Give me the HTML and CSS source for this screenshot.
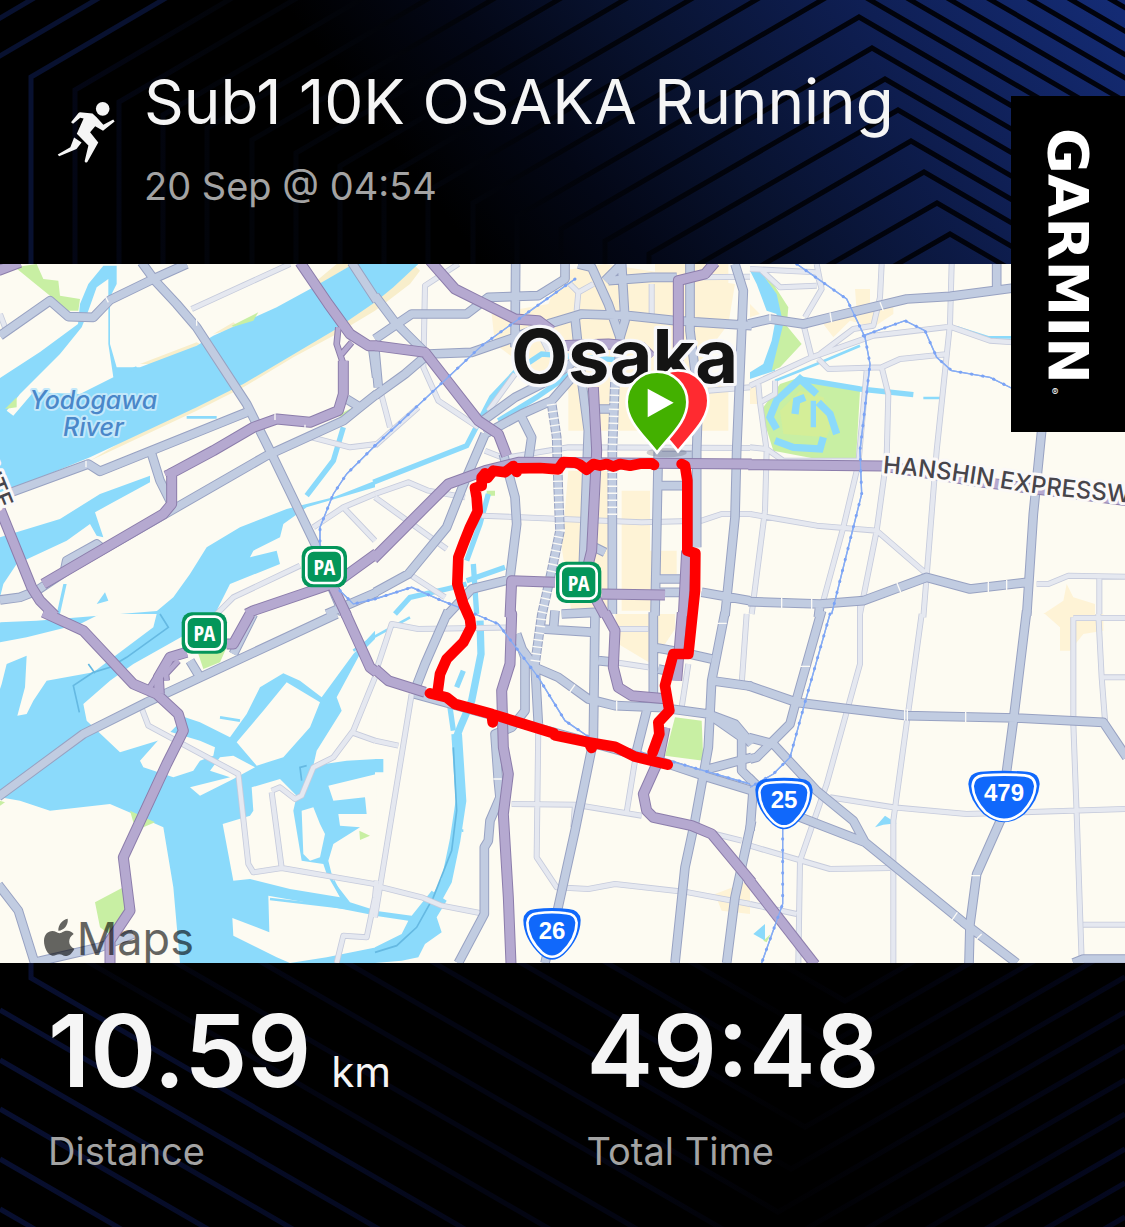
FILE: index.html
```html
<!DOCTYPE html>
<html lang="en">
<head>
<meta charset="utf-8">
<meta name="viewport" content="width=device-width, initial-scale=1">
<title>Sub1 10K OSAKA Running</title>
<link rel="stylesheet" href="styles.css">
</head>
<body>
<main class="card">
  <header class="card-head">
    <svg class="backdrop" viewBox="0 0 1125 264" preserveAspectRatio="xMaxYMin slice" aria-hidden="true">
      <defs>
        <linearGradient id="sky" gradientUnits="userSpaceOnUse" x1="380" y1="130" x2="904" y2="-270">
          <stop offset="0" stop-color="#000"/>
          <stop offset=".2" stop-color="#030716"/>
          <stop offset=".4" stop-color="#08122f"/>
          <stop offset=".7" stop-color="#0f1f54"/>
          <stop offset="1" stop-color="#142b74"/>
        </linearGradient>
        <linearGradient id="sky-line" gradientUnits="userSpaceOnUse" x1="0" y1="0" x2="1125" y2="0">
          <stop offset="0" stop-color="#04071a"/>
          <stop offset=".2" stop-color="#020409"/>
          <stop offset="1" stop-color="#01030d"/>
        </linearGradient>
      </defs>
      <rect width="1125" height="264" fill="url(#sky)"/>
      <g fill="none" stroke-width="5">
        <path stroke="#081130" d="M-58 264V52L690-386M-14 264V64L703-355M31 264V77L716-324"/>
        <path stroke="url(#sky-line)" d="M75 264V90L729-293l600 349M119 264V102L742-262l600 349M163 264V115L755-231l600 349M207 264V128L768-200l600 349M252 264V140L781-169l600 349M296 264V153L794-138l600 349M340 264V166L807-107l600 349M384 264V178L820-76l600 349M428 264V191L833-45l600 349M473 264V203L846-14l600 349M517 264V216L859 17l600 349M561 264V229L872 48l600 349M605 264V241L885 79l600 349M649 264V254L898 110l600 349M694 267L911 141l600 349M738 279L924 172l600 349M782 292L937 203l600 349M826 305L950 234l600 349"/>
      </g>
    </svg>
    <svg class="runner" viewBox="48 60 176 188" aria-hidden="true">
      <circle cx="185" cy="86" r="20"/>
      <path d="M118 96 155 100 167 111 187 133 216 117 220 123 186 150 163 137 148 155 172 185 140 242Q134 246 132 240L143 194 109 159 129 114 119 112 98 130 92 125 114 98Z"/>
      <path d="M101 170 123 185 108 204 57 225 53 220 90 199Z"/>
    </svg>
    <div class="heading">
      <h1>Sub1 10K OSAKA Running</h1>
      <p class="when">20 Sep @ 04:54</p>
    </div>
  </header>

  <svg class="map" viewBox="0 0 3375 2097" role="img" aria-label="Route map of Osaka">
    <defs>
      <g id="minor">
        <path d="M575 135 870 0M650 1050 700 1000 900 905M935 520 1050 550 1130 540M940 790 1030 730 1125 690M1030 730 1125 830M0 150 15 190"/>
        <g transform="translate(1125 0)"><path d="M250 0 150 65 145 310 190 410 310 490M20 395 45 490M0 690 100 655 160 680 270 700M0 700 215 855M320 755 560 765 800 775 980 770 1040 750 1130 750M585 60 610 85 605 140M610 85 655 60M830 60V150M400 580 580 550 1125 552M110 935 210 1000M500 220 520 260M960 40 1125 38M420 330 340 440M1000 380 1125 370M0 545 130 430M330 560 380 580"/></g>
        <g transform="translate(2250 0)"><path d="M0 15 200 25 215 75 165 160M30 15 90 70 200 65M200 0 215 75M395 0 390 100 370 185 310 195 210 270M605 0 600 180 560 560 520 1060M160 180 185 280 0 365M185 280 370 215 600 188 720 230 790 235M205 285 235 315 395 310 450 285 595 270M350 320 325 600 280 790 220 1010M395 310 415 390 410 580 380 800 330 1050M75 350V390L30 415 50 560 45 740 5 1050M25 360 30 415M0 550 50 555 100 590H330M0 750 200 785 380 800 530 930M860 960 895 960 955 935 1125 938M1048 940V1050"/></g>
        <g transform="translate(0 1050)"><path d="M420 270 445 335 715 480 745 750 760 775 845 762 1130 811M815 535 845 762M815 530 840 520 885 555 905 545 940 460 1000 430 1060 350 1125 190M1055 355 1125 380M1130 800 1125 850 1100 970 1030 965 1010 1047"/></g>
        <g transform="translate(1125 1050)"><path d="M0 180 50 30 130 45 420 40M110 240 0 910M0 380 70 395M0 815 140 850 200 875 330 900M490 330 485 730 545 820 640 825 720 810 940 835 1125 870M410 570 600 572 800 605M600 572 595 640M780 440 755 595M1115 0 1100 210M690 140 820 160M720 45H820M940 150 920 280M1020 660 1100 680"/></g>
        <g transform="translate(2250 1050)"><path d="M330-40V150L230 510 150 740 145 1047M515 0 430 620V1047M240 550 430 580 650 600 1125 585M0 695 240 765 420 762M970 10V330L980 600 995 1040M970 12H1125M1045 0 1055 190 1065 320M1055 190H1125M1000 932H1125M0 870 140 900"/></g>
      </g>
      <g id="major">
        <path d="M0 215 150 110 205 158 280 160 330 108 460 45 560 0M425-5 465 50 530 120 590 190 740 420 765 470 815 570 950 850 1000 980 1030 1050M20 690 265 600 300 622 740 445M455 570 480 650 520 730M0 1008 60 1000 110 980 200 920 530 730 800 575 1030 470 1080 430 1130 390M195 915 200 890 290 840 315 860M1055-5 1130 110M1040 405 1080 430M1118 250 1130 340M980 1050 1130 985"/>
        <g transform="translate(1125 0)"><path d="M0 95 60 175 150 265M422-5 420 250M0 225 110 150H275L340 100 490 95 570 45V-5M0 395 90 330 160 270 290 265 420 220 520 180M0 260 10 370M610 0 650 10 700 120 735 220 730 350M740 0 750 170 735 220M700 50 830 40 905 40M690 50 740 0M520 180 620 150 760 155 900 170 1130 185M600 160 620 350 640 500 625 900M945 0V200L970 400 965 560V850M1080 0 1105 80 1085 560 1080 760 1050 1055M310 480 420 400 520 350 600 290M330 510 440 450 530 410 600 330M330 510 270 650 215 790 100 930 0 985M440 460 470 520 460 590M385 570 420 700 425 780 405 940M850 560 840 1055M670 435H720M850 575H950M850 665H940M840 945H920M840 985H925M660 850 690 865M980 985 1125 1010M215 1055 290 975 410 945"/></g>
        <g id="chevron-streets" transform="translate(1125 0)"><path d="M530 420 545 520 550 680 555 800 530 920 500 1055 480 1200M720 350 712 560V1050"/></g>
        <g transform="translate(2250 0)"><path d="M-5 180 60 165 160 180 240 160 470 105 600 97 790 72M740 0V75M875 500 850 750 830 1055M-5 1013 210 1020 340 1010 530 940 660 975 830 955M210 1020 205 1060"/></g>
        <g transform="translate(0 1050)"><path d="M-5 548 250 360 440 265 1010 0M-5 812 55 890 105 1050M105 1045 300 1000 400 960M760 0 700 120M570 140 600 190"/></g>
        <g transform="translate(1125 1050)"><path d="M220-10 150 150 115 240M480 150 490 330M425 60 450 130V290L410 340 360 360 370 500 375 550 345 620 340 680 328 700V900L250 1047M430 90 480 160 550 190 640 255 720 275 850 280 1000 300 1080 330 1130 390M540-10 535 50M560 0 660-5 660 0 655 380 600 650 545 900 510 1047M500 45 660 55M670 140 720 145M835-5V260M835 100 920 115 1010 135M850 165 920 180M1050-5 1010 200 1000 400 960 620 930 760 900 1047M820 270 780 430M1010 200 1130 217M120 240 880 450 1000 490 1130 530M1000 465 1130 430M1000 300 1100 370V470L1130 500M1130 620 1080 850 1055 1047"/></g>
        <g transform="translate(2250 1050)"><path d="M215-10 140 255 120 330 60 390 20 430 0 435M-5 215 140 265 300 285 470 305 800 312 1060 325 1130 430M-5 370 70 390 200 530 310 620 345 685M-5 490 100 590 345 685 640 925 800 1047M830-10 790 320 770 470 760 600 680 780 660 930 657 1047M970 1047 1000 1035H1130M10 520 0 650"/></g>
      </g>
      <g id="expressway">
        <path d="M-5 20 60-5M900-5 985 120 1050 210 1105 245 1130 245M515 630V720L490 750 130 960M0 735 95 970 120 1010 165 1055M740 1050 760 1040 1010 955 1130 868M1000 970 1040 1055M1030 290V390L1015 440 930 475 830 465 760 490 640 560 510 630"/>
        <g transform="translate(1125 0)"><path d="M165-10 240 75 320 115 420 165 490 170 530 200M0 245 150 265 310 470 370 510 395 575M-5 885 220 660 330 620 430 595 1130 600M550 245 700 240 800 250 830 280M1020-5 990 30 910 50V320M655 370 665 560 650 860 640 900M935 860 925 1055M405 1060 410 950 540 955M680 990 870 993M660 1000 690 1055"/></g>
        <g transform="translate(2250 0)"><path d="M-5 602 400 606 700 655 1130 710"/></g>
        <g transform="translate(0 1050)"><path d="M130-5 250 50 400 210 470 240 535 300 550 350 500 450 370 730 390 890 330 980V1050M478 240 475 190 510 130 560 115M680 90H700L750 0M1035-5 1110 160 1130 175"/></g>
        <g transform="translate(1125 1050)"><path d="M0 165 40 200 150 235M405-5 410 0 405 150 380 230 385 400 400 480 385 600 400 850 408 1050M690-5 720 50 715 160 730 220 770 245 880 255M922-5 905 200M870 340 850 440 805 540 815 590 835 610 950 635 1010 660 1130 805"/></g>
        <g transform="translate(2250 1050)"><path d="M-5 795 195 1052"/></g>
      </g>
      <g id="ramps">
        <path d="M1015 190 1010 240 1030 300M1055 235 1025 270M495 630 540 610M450 1270 475 1230M500 1250 498 1230 535 1190"/>
      </g>
      <g id="rail">
        <path d="M1125 545 1040 630 1000 690 960 790V850M1020 980 1060 1020 1125 1005"/>
        <g transform="translate(1125 0)"><path d="M600 45 480 130 320 245 0 545M0 1005 110 970 200 1010 290 1045"/></g>
        <g transform="translate(2250 0)"><path d="M140 0 290 105 345 220 360 300 330 560 335 690 245 1050M340 215 465 170 525 200 560 280 605 320 720 340 790 375"/></g>
        <g transform="translate(1125 1050)"><path d="M300 0 370 30 490 190 570 320 650 375 900 445 1125 510"/></g>
        <g transform="translate(2250 1050)"><path d="M240 0 165 265 120 430 70 480 0 520M98 640V870L35 1047"/></g>
      </g>
      <path id="shield" d="M-50-75Q0-81 50-75 84-72 86-42 85 15 35 62 0 92-35 62-85 15-86-42-84-72-50-75Z"/>
      <path id="shield-wide" d="M-70-75Q0-80 70-75 105-72 107-38 104 10 62 52 0 102-62 52-104 10-107-38-105-72-70-75Z"/>
      <g id="parking">
        <rect x="-68" y="-62" width="136" height="124" rx="30" fill="#04965a"/>
        <rect x="-54" y="-49" width="108" height="98" rx="22" fill="none" stroke="#fff" stroke-width="8"/>
        <text class="parking-text" y="25">PA</text>
      </g>
      <path id="pin" d="M0 142C-42 88-91 48-91-10A91 91 0 0 1 91-10C91 48 42 88 0 142Z"/>
    </defs>

    <rect class="land" width="3375" height="2097"/>

    <!-- built-up areas -->
    <g class="town">
      <g transform="translate(1125 0)"><path d="M350 150 520 120 560 20 690 0 1080 60 1060 180 970 300 1060 360V500H580V380L440 300 360 240ZM580 620H700V1050H590L560 850ZM740 680H825V860H905V930H840V1040H740ZM840 0H1060V60H840Z"/></g>
      <g transform="translate(2250 0)"><path d="M315 75H360V120L430 130V150L370 190 300 170 250 220 220 180 320 140ZM950 960 970 1000 1035 1020V1050H880L940 1010ZM0 120 30 150 0 160ZM0 370H25V420H0Z"/></g>
      <g transform="translate(1125 1050)"><path d="M720 0H900V45L830 150 730 90ZM1020 840 1125 800V900L1040 890Z"/></g>
      <g transform="translate(2250 1050)"><path d="M885 0H1060V50L1000 60 960 110H930V40Z"/></g>
    </g>
    <path class="sand" d="M950 50 1010 0H1060L960 60ZM600 240 540 270 480 300 420 300 590 235ZM640 210 720 190 700 175ZM270 590 590 440 730 370 880 280 1000 215 1125 140 1230 60 1260 20 1240 0 1100 90Z"/>

    <!-- rivers and harbour -->
    <g class="water">
      <path d="M0 342 120 264 234 180 240 120 265 60 310 5H350V60L330 100V240L350 310 420 310 590 245 640 215 830 130 940 70 1060 0H1255L1180 70 1125 115 1000 200 730 360 590 430 270 580 0 690Z"/>
      <path d="M0 820 180 765 300 690 450 635V655L330 720 285 745 310 820 290 815 270 780 200 830 50 900 10 960 0 1000Z"/>
      <path d="M1125 650 1000 700 860 735 720 790 620 850 570 930 520 1000 460 1050 640 1060 690 960 840 900 830 860 750 880 760 860 840 820 850 780 920 730 1125 670Z"/>
      <path d="M0 1075 110 1070 480 1040 640 1050 1125 1050V2097H0Z"/>
      <path d="M170 1050 190 960H200L180 1050ZM290 1020 315 985 325 1010Z"/>
    </g>
    <g class="land">
      <path d="M265 140 290 70 325 45V240L340 340 240 390 100 385 40 455 20 440 60 390 180 270 245 190Z"/>
      <g transform="translate(0 1050)">
        <path d="M0 0H100L80 10 0 25ZM0 85 80 70 240 30 300 0H470L460 40 340 130 280 175 140 200 100 260 80 300 52 305 75 220 80 125 20 150 5 210 0 225Z"/>
        <path d="M640 0H1125V50L1060 120 965 250 900 200 850 178 780 220 740 300 690 370 600 325 555 310 490 375 360 415 260 320 250 270 330 200 400 150 560 60Z"/>
        <path d="M860 205 960 265 930 340 850 430 770 455 710 385 790 290Z"/>
        <path d="M420 440 500 350 600 380 645 400 640 425 600 440 580 470 520 490 430 460Z"/>
        <path d="M570 520 690 490 630 470 660 430 700 425 765 460 700 495 600 545Z"/>
        <path d="M0 550 60 560 150 590 330 570 400 600 490 640 520 820 540 1047H0Z"/>
        <path d="M668 630 750 605 760 590 755 520 840 495 890 545 880 590 905 740 970 750 980 780 1020 850 870 825 750 795 700 800Z"/>
        <path d="M905 590 940 580 960 630 975 660 960 730 930 740 910 720Z"/>
        <path d="M1130 70 1080 120 1010 250 1025 290 950 410 940 455 1040 440 1130 435Z"/>
        <path d="M985 515 1130 480V890L1050 865 1000 800 985 740 1000 690 1080 640 1020 635 1015 600 1100 600 1095 550 1000 560Z"/>
        <path d="M805 845 1000 880 1130 905V1000L980 1030 870 1047 830 1030 700 965 697 912 770 940 808 955Z"/>
      </g>
    </g>
    <g class="water">
      <path d="M2250 20 2280 20 2340 100 2360 190 2330 280 2325 320 2250 345V325L2290 300 2315 230 2330 150 2300 140 2270 60Z"/>
      <g transform="translate(1125 1050)"><path d="M170 830 215 860 185 910 200 955 150 990 130 1030 80 1040 0 1047V1000L80 960 100 920 0 905V890L110 905ZM0 435H25V475H0Z"/></g>
      <g transform="translate(2250 1050)"><path d="M10 960 45 930V980ZM375 640 405 605 440 628 400 632Z"/></g>
    </g>

    <!-- parks -->
    <g class="park">
      <path d="M45 10 110 0 130 45 175 50 180 95 240 105 235 140H200L150 95 100 55ZM695 185 775 145 760 170 700 188ZM15 435 50 400V430ZM1010 455 1060 430 1030 460ZM1460 680H1485V695H1460Z"/>
      <path d="M2280 20 2320 60 2365 130 2360 185 2405 240 2340 310 2315 320 2350 180 2330 90ZM2290 430 2340 360 2400 340 2580 380 2568 585H2450L2320 560 2295 480Z"/>
      <g transform="translate(0 1050)"><path d="M595 120 680 100 660 145 610 165ZM390 590 465 625 430 640 400 625ZM285 865 370 820 380 900 340 970 300 940ZM1078 650 1110 665 1080 678ZM0 560 15 565 0 575Z"/></g>
      <path d="M2025 1360 2105 1370 2110 1490 1995 1475ZM2290 2030 2312 2010 2300 2035Z"/>
    </g>
    <path class="lawn" d="M2340 440 2400 380 2470 400 2500 470 2480 520 2350 510Z"/>

    <g class="stream">
      <path class="w8" d="M350 320H390L410 310M560 460H650M1230 1060 1120 1120 1060 1160M2325 350 2450 300 2580 245M2965 220H3040M2770 402H2828M2870 190 2965 220M660 1360 720 1370M1000 1850 1030 1910M810 1905 1110 1940M1385 1700H1390"/>
      <path class="w14" d="M1030 490 1000 590 920 695M1120 655 1400 545 1475 400 1550 320 1625 270 1880 290M1495 470 1610 400 1710 330M1465 690 1440 780 1400 890M1400 950 1515 910M1185 1050 1230 1000 1340 975 1400 960M1420 900 1430 1050M1390 1220 1370 1270M1350 1330 1360 1400M2400 345 2580 375 2740 392M2440 410V490"/>
      <path class="w22" d="M1440 1070 1443 1170 1415 1310 1385 1380 1365 1430M2450 390 2400 345 2330 410 2310 460 2330 495M2385 450 2390 410 2415 400M2455 415 2490 450 2510 510M2325 530 2380 550 2460 555 2470 520"/>
      <path class="w28" d="M1370 1410 1383 1610 1365 1730 1340 1850 1285 1950"/>
    </g>
    <path class="tunnel" d="M480 1050 505 1090 380 1180 330 1210 280 1225 220 1265 238 1345M265 1200 285 1228M905 1550 900 1510 920 1505M1360 1450 1370 1640 1355 1760 1300 1900 1250 1990 1190 2045 1125 2065"/>

    <!-- roads: casing first, then surface -->
    <use href="#minor" class="road minor-case"/>
    <use href="#minor" class="road minor-fill"/>
    <use href="#rail" class="rail-line"/>
    <use href="#major" class="road major-case"/>
    <use href="#major" class="road major-fill"/>
    <path class="street-gaps" d="M1655 420 1670 520 1675 680 1680 800 1655 920 1625 1055 1605 1200M1845 350 1837 560V760"/>
    <use href="#ramps" class="road ramp-case"/>
    <use href="#expressway" class="road express-case"/>
    <use href="#ramps" class="road ramp-fill"/>
    <use href="#expressway" class="road express-fill"/>
    <use href="#rail" class="rail-line"/>
    <use href="#rail" class="rail-dots"/>
    <path class="ticks" d="M315 95 325 115M590 165V185M258 590V610M825 448V468M915 482V500M2310 150V170M2490 145 2495 175M2640 115 2650 140M2345 1000V1036M2435 1000V1036M2690 955 2702 985M2965 950V985M3020 948V982M2714 1335V1370M2722 1335V1370M2897 1340V1375M2855 1970 2872 1945M2905 1835H2940M1850 1310V1340M1705 1290 1725 1262M1480 1545H1505M2150 1078H2180M2400 1207H2430M2930 2025 2945 2010M3168 1650"/>

    <!-- recorded track -->
    <g class="track">
      <path d="M1962 603 1955 598 1920 599 1890 605 1860 600 1840 608 1820 600 1800 605 1780 600 1760 617 1740 602 1725 596 1690 594 1675 616 1620 612 1555 613 1550 624 1540 606 1515 625 1480 620 1462 642 1455 628 1445 640V665L1425 672 1430 700 1433 742 1410 790 1390 840 1375 880 1372 960 1390 1020 1410 1065 1413 1090 1390 1135 1340 1185 1320 1230 1312 1290"/>
      <path d="M1290 1288 1340 1300 1365 1320 1475 1350 1478 1375M1475 1350 1662 1408 1664 1414 1765 1435 1775 1452M1765 1435 1845 1448 1905 1478 2003 1502"/>
      <path d="M2045 600 2055 605 2062 650V860L2086 868 2085 980 2065 1170H2020L1995 1265 2008 1340 1975 1375 1978 1410 1958 1465"/>
    </g>

    <!-- place and road names -->
    <text class="city" x="1874" y="357">Osaka</text>
    <text class="river" x="280" y="434">Yodogawa</text>
    <text class="river" x="280" y="515">River</text>
    <path id="hanshin" d="M2648 627Q2800 638 3000 672T3500 722" fill="none"/>
    <text class="road-name"><textPath href="#hanshin">HANSHIN EXPRESSWAY</textPath></text>
    <text class="road-name route-end" transform="translate(-6 738) rotate(68)">ROUTE</text>

    <use href="#parking" x="973" y="908"/>
    <use href="#parking" x="1736" y="955"/>
    <use href="#parking" x="613" y="1107"/>

    <g class="shield" transform="translate(1656 2010)"><use href="#shield"/><use href="#shield" class="shield-rim" transform="translate(0 2) scale(.86)"/><text y="14">26</text></g>
    <g class="shield" transform="translate(2352 1619)"><use href="#shield"/><use href="#shield" class="shield-rim" transform="translate(0 2) scale(.86)"/><text y="14">25</text></g>
    <g class="shield" transform="translate(3012 1598)"><use href="#shield-wide"/><use href="#shield-wide" class="shield-rim" transform="translate(0 2) scale(.88)"/><text y="14">479</text></g>

    <ellipse cx="2000" cy="566" rx="60" ry="14" fill="#667" opacity=".3"/>
    <use href="#pin" class="pin finish" x="2034" y="420"/>
    <use href="#pin" class="pin start" x="1971" y="424"/>
    <path d="M1943 374V460L2021 416Z" fill="#fff"/>

    <g class="credit">
      <path d="M203 1964C206 1982 192 1999 175 2000 174 1983 187 1967 203 1964ZM178 2008C188 2006 190 2000 202 2000 210 2000 217 2004 221 2010 202 2022 204 2046 223 2054 217 2068 207 2076 197 2076 188 2076 187 2071 178 2071 169 2071 165 2076 157 2075 143 2073 132 2050 132 2031 132 2012 144 2001 157 2001 167 2001 171 2007 178 2008Z"/>
      <text x="230" y="2073">Maps</text>
    </g>
  </svg>

  <section class="stats">
    <svg class="backdrop" viewBox="0 963 1125 264" preserveAspectRatio="xMinYMin slice" aria-hidden="true">
      <defs>
        <linearGradient id="floor-line" gradientUnits="userSpaceOnUse" x1="0" y1="1227" x2="1125" y2="1227">
          <stop offset="0" stop-color="#080f30"/>
          <stop offset=".3" stop-color="#050a22"/>
          <stop offset=".5" stop-color="#03040f"/>
          <stop offset=".7" stop-color="#010103"/>
          <stop offset="1" stop-color="#040820"/>
        </linearGradient>
        <linearGradient id="floor-line-dim" gradientUnits="userSpaceOnUse" x1="0" y1="963" x2="1125" y2="963">
          <stop offset="0" stop-color="#020308"/>
          <stop offset=".3" stop-color="#030512"/>
          <stop offset=".55" stop-color="#030512"/>
          <stop offset=".7" stop-color="#010103"/>
          <stop offset="1" stop-color="#030618"/>
        </linearGradient>
      </defs>
      <g fill="none" stroke-width="5">
        <path stroke="url(#floor-line-dim)" d="M0 463 858 959 1125 806M0 513 845 1001 1125 840M0 563 831 1043 1125 874M0 612 818 1085 1125 909M0 662 805 1127 1125 943M0 712 791 1169 1125 977M0 762 778 1212 1125 1012M0 811 764 1253 1125 1046M0 861 751 1295 1125 1080M0 911 738 1338 1125 1114"/>
        <path stroke="url(#floor-line)" d="M31 960V978L724 1379 1125 1149M0 1010 711 1421 1125 1183M0 1060 698 1463 1125 1217M0 1109 684 1504M0 1159 671 1547M0 1209 658 1589"/>
      </g>
    </svg>
    <div class="stat">
      <p class="value"><span>10.59</span><span class="unit">km</span></p>
      <p class="label">Distance</p>
    </div>
    <div class="stat">
      <p class="value"><span>49:48</span></p>
      <p class="label">Total Time</p>
    </div>
  </section>

  <aside class="brand" aria-label="Garmin"><span class="brand-name">GARMIN</span><span class="brand-mark">®</span></aside>
</main>
</body>
</html>
```
FILE: styles.css
```css
* { box-sizing: border-box; }

body {
  margin: 0;
  background: #000;
  color: #f5f5f5;
  font-family: Inter, "Liberation Sans", sans-serif;
}

h1, p { margin: 0; font-weight: 400; }

.card {
  position: relative;
  display: flex;
  flex-direction: column;
  min-height: 100vh;
}

.backdrop {
  position: absolute;
  inset: 0;
  width: 100%;
  height: 100%;
  z-index: -1;
}

.card-head {
  position: relative;
  z-index: 0;
  display: flex;
  gap: 28px;
  padding: 62px 48px 54px 56px;
}

.runner {
  flex: none;
  width: 60px;
  height: 64px;
  margin-top: 38px;
  fill: #f5f5f5;
}

.heading { display: flex; flex-direction: column; gap: 20px; }
h1 { font-size: 62px; line-height: 80px; }
.when, .label { color: #a3a3a3; font-size: 38px; line-height: 48px; }

.map { display: block; width: 100%; height: auto; overflow: hidden; }

.stats {
  position: relative;
  z-index: 0;
  flex: 1;
  display: grid;
  grid-template-columns: 1fr 1fr;
  padding: 28px 0 52px 48px;
}
.stat { display: flex; flex-direction: column; gap: 16px; }
.value {
  display: flex;
  align-items: baseline;
  gap: 20px;
  font-size: 100px;
  line-height: 120px;
  font-weight: 600;
}
.unit { font-size: 42px; line-height: 48px; font-weight: 400; }

.brand {
  position: absolute;
  top: 96px;
  right: 0;
  width: 114px;
  height: 336px;
  padding-top: 32px;
  display: flex;
  gap: 2px;
  align-items: center;
  writing-mode: vertical-rl;
  background: #000;
  color: #fff;
}
.brand-name { font: 700 56px/60px "DejaVu Sans", sans-serif; }
.brand-mark { align-self: flex-end; margin-left: 38px; font-size: 10px; line-height: 12px; }

/* map areas */
.land { fill: #fdfbf2; }
.town { fill: #fef3d6; }
.sand { fill: #f8eecb; }
.water { fill: #8bdafb; }
.park { fill: #c8efa3; }
.lawn { fill: #d4ee98; }
.stream { fill: none; stroke: #8bdafb; }
.w8 { stroke-width: 8px; }
.w14 { stroke-width: 16px; }
.w22 { stroke-width: 22px; }
.w28 { stroke-width: 32px; }
.tunnel { fill: none; stroke: #65b9e2; stroke-width: 5px; }

/* roads */
.road { fill: none; stroke-linejoin: round; }
.minor-case { stroke: #c6cbdc; stroke-width: 18px; }
.minor-fill { stroke: #e5e8f0; stroke-width: 13px; }
.major-case { stroke: #98a2c2; stroke-width: 29px; }
.major-fill { stroke: #c1cce1; stroke-width: 23px; }
.ramp-case { stroke: #8c7dab; stroke-width: 20px; }
.ramp-fill { stroke: #b5a9d0; stroke-width: 14px; }
.express-case { stroke: #8c7dab; stroke-width: 33px; }
.express-fill { stroke: #b5a9d0; stroke-width: 27px; }
.street-gaps { fill: none; stroke: #fbfaf6; stroke-width: 30px; stroke-dasharray: 4px 17px; }
.ticks { fill: none; stroke: #fbfaf6; stroke-width: 4px; }
.rail-line { fill: none; stroke: #86acf4; stroke-width: 4px; }
.rail-dots { fill: none; stroke: #7ba3f5; stroke-width: 9px; stroke-linecap: round; stroke-dasharray: 1px 33px; }

.track { fill: none; stroke: #f00; stroke-width: 32px; stroke-linecap: round; stroke-linejoin: round; }

/* map labels */
.city, .river, .road-name { paint-order: stroke; stroke-linejoin: round; font-family: Inter, sans-serif; }
.city { font-size: 222px; font-weight: 700; text-anchor: middle; fill: #141414; stroke: #f8f8fb; stroke-width: 20px; }
.river { font-size: 75px; font-style: italic; font-weight: 500; text-anchor: middle; fill: #4a87c9; stroke: #c3e8fa; stroke-width: 12px; }
.road-name { font-size: 72px; font-weight: 500; fill: #47454b; stroke: #fbf9f8; stroke-width: 18px; }
.route-end { text-anchor: end; }

.parking-text { font: 700 66px "Liberation Sans Narrow", "Open Sans Condensed", "Liberation Sans", sans-serif; text-anchor: middle; fill: #fff; }
.shield { fill: #1068fb; }
.shield-rim { fill: none; stroke: #fff; stroke-width: 9px; }
.shield text { font: 700 72px "Liberation Sans", sans-serif; text-anchor: middle; fill: #fff; }

.pin { stroke: #fff; stroke-width: 8px; }
.start { fill: #43b000; }
.finish { fill: #ff2a30; }

.credit { fill: #000; opacity: .6; }
.credit text { font: 400 135px Inter, sans-serif; }
```
